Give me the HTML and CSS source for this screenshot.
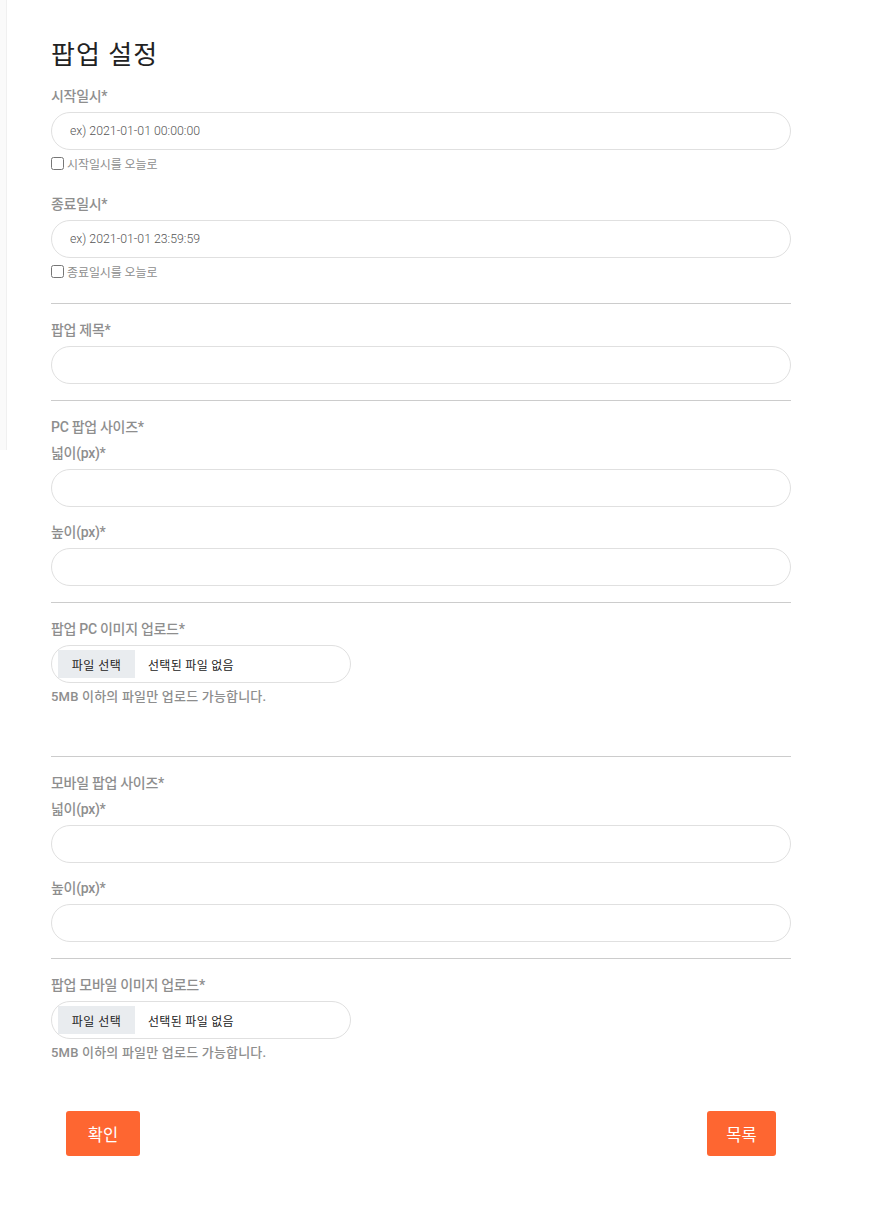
FILE: index.html
```html
<!DOCTYPE html>
<html lang="ko">
<head>
<meta charset="utf-8">
<title>팝업 설정</title>
<link rel="stylesheet" href="styles.css">
</head>
<body>
<div class="page">
  <div class="side-edge"></div>
  <main class="form-wrap">
    <h1 class="title">팝업 설정</h1>

    <section class="block">
      <div class="field">
        <label class="label">시작일시*</label>
        <input class="text-input" type="text" placeholder="ex) 2021-01-01 00:00:00">
        <label class="check"><input type="checkbox"><span>시작일시를 오늘로</span></label>
      </div>
      <div class="field gap-lg">
        <label class="label">종료일시*</label>
        <input class="text-input" type="text" placeholder="ex) 2021-01-01 23:59:59">
        <label class="check"><input type="checkbox"><span>종료일시를 오늘로</span></label>
      </div>
    </section>

    <hr class="divider first">

    <section class="block">
      <div class="field">
        <label class="label">팝업 제목*</label>
        <input class="text-input" type="text">
      </div>
    </section>

    <hr class="divider">

    <section class="block">
      <div class="group-title">PC 팝업 사이즈*</div>
      <div class="field">
        <label class="label">넓이(px)*</label>
        <input class="text-input" type="text">
      </div>
      <div class="field gap">
        <label class="label">높이(px)*</label>
        <input class="text-input" type="text">
      </div>
    </section>

    <hr class="divider">

    <section class="block">
      <div class="field">
        <label class="label">팝업 PC 이미지 업로드*</label>
        <div class="file-box"><span class="file-btn">파일 선택</span><span class="file-name">선택된 파일 없음</span></div>
        <p class="hint">5MB 이하의 파일만 업로드 가능합니다.</p>
      </div>
    </section>

    <hr class="divider tall">

    <section class="block">
      <div class="group-title">모바일 팝업 사이즈*</div>
      <div class="field">
        <label class="label">넓이(px)*</label>
        <input class="text-input" type="text">
      </div>
      <div class="field gap">
        <label class="label">높이(px)*</label>
        <input class="text-input" type="text">
      </div>
    </section>

    <hr class="divider">

    <section class="block">
      <div class="field">
        <label class="label">팝업 모바일 이미지 업로드*</label>
        <div class="file-box"><span class="file-btn">파일 선택</span><span class="file-name">선택된 파일 없음</span></div>
        <p class="hint">5MB 이하의 파일만 업로드 가능합니다.</p>
      </div>
    </section>

    <div class="actions">
      <button class="btn btn-ok" type="button">확인</button>
      <button class="btn btn-list" type="button">목록</button>
    </div>
  </main>
</div>
</body>
</html>
```
FILE: styles.css
```css
* { box-sizing: border-box; }

body {
  margin: 0;
  background: #fff;
  font-family: Roboto, "Noto Sans CJK KR", "Noto Sans", sans-serif;
  color: #333;
}

.page {
  display: flex;
  align-items: flex-start;
}

.side-edge {
  width: 7px;
  height: 450px;
  background: #fafafa;
  border-right: 1px solid #f0f0f0;
  flex: none;
}

.form-wrap {
  margin-left: 44px;
  width: 740px;
  padding-top: 37px;
  padding-bottom: 49px;
  display: flex;
  flex-direction: column;
}

.title {
  margin: 0 0 13px;
  font-size: 26px;
  line-height: 36px;
  font-weight: 400;
  color: #222;
  letter-spacing: 1px;
}

.block {
  display: flex;
  flex-direction: column;
}

.field {
  display: flex;
  flex-direction: column;
}

.field.gap { margin-top: 15px; }
.field.gap-lg { margin-top: 22px; }

.label,
.group-title {
  font-size: 14px;
  line-height: 20px;
  font-weight: 500;
  color: #8e8e8e;
  letter-spacing: -0.3px;
}

.label { margin-bottom: 6px; }
.group-title { margin-bottom: 6px; }

.text-input {
  width: 740px;
  height: 38px;
  border: 1px solid #e0e0e0;
  border-radius: 19px;
  padding: 0 18px;
  font-family: Roboto, "Noto Sans CJK KR", sans-serif;
  font-size: 12.3px;
  font-weight: 300;
  color: #333;
  outline: none;
  background: #fff;
}

.text-input::placeholder { color: #555; }

.check {
  display: flex;
  align-items: center;
  gap: 3px;
  margin-top: 4px;
  height: 18px;
  font-size: 12px;
  color: #8e8e8e;
  letter-spacing: -0.1px;
}

.check input {
  margin: 0;
  width: 13px;
  height: 13px;
}

.divider {
  border: 0;
  border-top: 1px solid #cccccc;
  height: 0;
  margin: 16px 0 16px;
  width: 740px;
}

.divider.first { margin-top: 23px; }
.divider.tall { margin-top: 49px; }

.file-box {
  width: 300px;
  height: 38px;
  border: 1px solid #e0e0e0;
  border-radius: 19px;
  display: flex;
  align-items: center;
  padding-left: 6px;
  font-size: 12px;
  color: #222;
}

.file-btn {
  background: #e9ecef;
  height: 28px;
  width: 77px;
  display: flex;
  align-items: center;
  justify-content: center;
  letter-spacing: 0.5px;
}

.file-name {
  margin-left: 13px;
  letter-spacing: 0.3px;
}

.hint {
  margin: 4px 0 0;
  font-size: 13px;
  line-height: 20px;
  font-weight: 500;
  color: #8e8e8e;
  letter-spacing: 0.2px;
}

.actions {
  margin-top: 48px;
  display: flex;
  justify-content: space-between;
  padding: 0 15px;
}

.btn {
  height: 45px;
  border: 0;
  border-radius: 3px;
  background: #fe6631;
  color: #fff;
  font-family: "Noto Sans CJK KR", sans-serif;
  font-size: 16.5px;
  cursor: pointer;
}

.btn-ok { width: 74px; }
.btn-list { width: 69px; }
```
